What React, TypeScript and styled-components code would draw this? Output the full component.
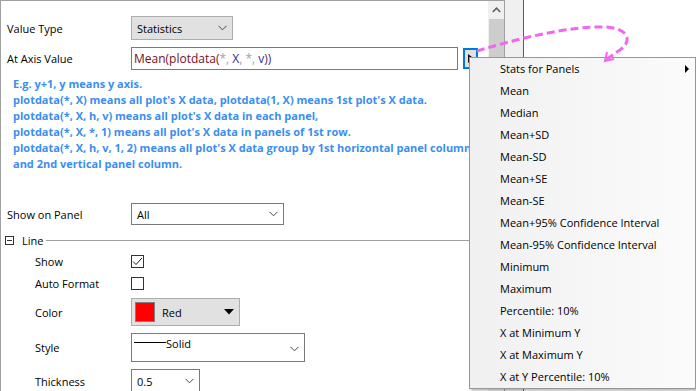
import React from "react";
import styled, { createGlobalStyle } from "styled-components";

const GlobalStyle = createGlobalStyle`
  html, body { margin: 0; padding: 0; background: #ffffff; }
  body {
    width: 696px; height: 391px; overflow: hidden;
    font-family: "Open Sans", "Noto Sans", sans-serif;
    font-size: 11px; color: #000;
  }
  * { box-sizing: border-box; }
`;

const Page = styled.div`
  position: relative;
  display: flex;
  width: 696px;
  height: 391px;
  overflow: hidden;
`;

const Panel = styled.div`
  display: flex;
  width: 505px;
  height: 391px;
  border-left: 1px solid #a0a0a0;
  border-top: 1px solid #a0a0a0;
  border-right: 1px solid #a0a0a0;
  background: #fff;
`;

const Content = styled.div`
  flex: 1;
  padding: 14px 0 0 6px;
  overflow: hidden;
`;

const Scrollbar = styled.div`
  width: 16px;
  background: #f0f0f0;
  display: flex;
  flex-direction: column;
  align-items: center;
`;

const ScrollArrow = styled.div`
  height: 18px;
  display: flex;
  align-items: center;
  justify-content: center;
`;

const ScrollThumb = styled.div`
  width: 15px;
  height: 90px;
  background: #cdcdcd;
`;

const Strip = styled.div`
  width: 19px;
  background: #f0f0f0;
  border-right: 1px solid #0078d7;
`;

const Row = styled.div<{ $mt: number; $h: number }>`
  display: flex;
  align-items: center;
  margin-top: ${(p) => p.$mt}px;
  height: ${(p) => p.$h}px;
`;

const Label = styled.div<{ $indent?: boolean }>`
  width: 124px;
  padding-left: ${(p) => (p.$indent ? 28 : 0)}px;
  white-space: nowrap;
  color: #000;
`;

const Select = styled.div<{ $w: number; $h: number; $gray?: boolean; $top?: boolean; $flush?: boolean }>`
  position: relative;
  width: ${(p) => p.$w}px;
  height: ${(p) => p.$h}px;
  border: 1px solid ${(p) => (p.$gray ? "#adadad" : "#7a7a7a")};
  background: ${(p) => (p.$gray ? "#e1e1e1" : "#ffffff")};
  display: flex;
  align-items: ${(p) => (p.$top ? "flex-start" : "center")};
  padding: ${(p) => (p.$top ? "2px 0 0 2px" : p.$flush ? "0" : "0 0 0 5px")};
`;

const SelectText = styled.span`
  flex: 1;
  white-space: nowrap;
`;

const ChevronBox = styled.span`
  display: flex;
  align-items: center;
  justify-content: center;
  width: 20px;
  align-self: center;
`;

const TextInput = styled.div`
  width: 327px;
  height: 23px;
  border: 1px solid #7a7a7a;
  padding-left: 2px;
  font-size: 12px;
  line-height: 21px;
  white-space: pre;
`;

const Tok = styled.span<{ $c: string }>`
  color: ${(p) => p.$c};
`;

const MenuButton = styled.div`
  margin-left: 5px;
  width: 15px;
  height: 21px;
  border: 2px solid #0078d7;
  background: #e1e1e1;
  display: flex;
  align-items: center;
  justify-content: center;
`;

const Hint = styled.div`
  margin-top: 6px;
  padding-left: 6px;
  color: #3a8ef0;
  font-weight: 700;
  font-size: 11px;
  line-height: 16px;
  white-space: nowrap;
`;

const GroupHeader = styled.div`
  display: flex;
  align-items: center;
  margin-top: 8px;
  height: 14px;
  margin-left: -2px;
`;

const Collapse = styled.span`
  position: relative;
  width: 9px;
  height: 9px;
  border: 1px solid #333;
  margin-right: 8px;
  &::after {
    content: "";
    position: absolute;
    left: 1px;
    right: 1px;
    top: 3px;
    height: 1px;
    background: #333;
  }
`;

const GroupRule = styled.span`
  flex: 1;
  height: 1px;
  background: #a0a0a0;
  margin-left: 3px;
`;

const Checkbox = styled.span`
  width: 13px;
  height: 13px;
  border: 1px solid #333;
  background: #fff;
  display: flex;
  align-items: center;
  justify-content: center;
`;

const Swatch = styled.span`
  width: 20px;
  height: 20px;
  background: #ff0000;
  border: 1px solid #808080;
  margin-left: 3px;
  margin-right: 7px;
`;

const LineSample = styled.span`
  width: 32px;
  height: 1px;
  background: #000;
  margin-top: 6px;
`;

const Menu = styled.div`
  position: absolute;
  left: 469px;
  top: 57px;
  width: 227px;
  border: 1px solid #979797;
  background: linear-gradient(90deg, #f0f0f0 0%, #f7f7f7 60%, #fbfbfb 100%);
  box-shadow: 2px 2px 2px rgba(0, 0, 0, 0.25);
`;

const MenuItem = styled.div`
  position: relative;
  height: 22px;
  display: flex;
  align-items: center;
  padding: 0 0 2px 30px;
  white-space: nowrap;
`;

const SubArrow = styled.span`
  position: absolute;
  right: 6px;
  top: 7px;
  width: 0;
  height: 0;
  border-top: 4px solid transparent;
  border-bottom: 4px solid transparent;
  border-left: 4px solid #000;
`;

const Overlay = styled.svg`
  position: absolute;
  left: 0;
  top: 0;
  pointer-events: none;
`;

const Chevron = () => (
  <svg width="9" height="6" viewBox="0 0 9 6">
    <polyline points="0.5,0.8 4.5,4.8 8.5,0.8" fill="none" stroke="#444" strokeWidth="1" />
  </svg>
);

const menuItems = [
  "Mean",
  "Median",
  "Mean+SD",
  "Mean-SD",
  "Mean+SE",
  "Mean-SE",
  "Mean+95% Confidence Interval",
  "Mean-95% Confidence Interval",
  "Minimum",
  "Maximum",
  "Percentile: 10%",
  "X at Minimum Y",
  "X at Maximum Y",
  "X at Y Percentile: 10%",
];

const hints = [
  "E.g. y+1, y means y axis.",
  "plotdata(*, X) means all plot's X data, plotdata(1, X) means 1st plot's X data.",
  "plotdata(*, X, h, v) means all plot's X data in each panel,",
  "plotdata(*, X, *, 1) means all plot's X data in panels of 1st row.",
  "plotdata(*, X, h, v, 1, 2) means all plot's X data group by 1st horizontal panel column",
  "and 2nd vertical panel column.",
];

export default function App() {
  return (
    <>
      <GlobalStyle />
      <Page>
        <Panel>
          <Content>
            <Row $mt={1} $h={24}>
              <Label>Value Type</Label>
              <Select $w={102} $h={24} $gray>
                <SelectText>Statistics</SelectText>
                <ChevronBox><Chevron /></ChevronBox>
              </Select>
            </Row>
            <Row $mt={7} $h={23}>
              <Label>At Axis Value</Label>
              <TextInput>
                <Tok $c="#7b0d1e">Mean(plotdata(</Tok>
                <Tok $c="#9aa3b5">*, </Tok>
                <Tok $c="#2e2e8f">X</Tok>
                <Tok $c="#9aa3b5">, *, </Tok>
                <Tok $c="#2e2e8f">v</Tok>
                <Tok $c="#4a2a6a">))</Tok>
              </TextInput>
              <MenuButton>
                <svg width="6" height="9" viewBox="0 0 6 9">
                  <polygon points="0,0 6,4.5 0,9" fill="#1a0a0a" />
                </svg>
              </MenuButton>
            </Row>
            <Hint>
              {hints.map((h) => (
                <div key={h}>{h}</div>
              ))}
            </Hint>
            <Row $mt={31} $h={22}>
              <Label>Show on Panel</Label>
              <Select $w={153} $h={22}>
                <SelectText>All</SelectText>
                <ChevronBox><Chevron /></ChevronBox>
              </Select>
            </Row>
            <GroupHeader>
              <Collapse />
              <span>Line</span>
              <GroupRule />
            </GroupHeader>
            <Row $mt={7} $h={14}>
              <Label $indent>Show</Label>
              <Checkbox>
                <svg width="11" height="9" viewBox="0 0 11 9">
                  <polyline points="1,4.5 4,7.5 10,1" fill="none" stroke="#222" strokeWidth="1" />
                </svg>
              </Checkbox>
            </Row>
            <Row $mt={8} $h={14}>
              <Label $indent>Auto Format</Label>
              <Checkbox />
            </Row>
            <Row $mt={8} $h={28}>
              <Label $indent>Color</Label>
              <Select $w={109} $h={28} $gray $flush>
                <Swatch />
                <SelectText>Red</SelectText>
                <ChevronBox>
                  <svg width="10" height="6" viewBox="0 0 10 6">
                    <polygon points="0,0 10,0 5,5.5" fill="#000" />
                  </svg>
                </ChevronBox>
              </Select>
            </Row>
            <Row $mt={7} $h={29}>
              <Label $indent>Style</Label>
              <Select $w={174} $h={29} $top>
                <LineSample />
                <SelectText>Solid</SelectText>
                <ChevronBox><Chevron /></ChevronBox>
              </Select>
            </Row>
            <Row $mt={7} $h={24}>
              <Label $indent>Thickness</Label>
              <Select $w={69} $h={24}>
                <SelectText>0.5</SelectText>
                <ChevronBox><Chevron /></ChevronBox>
              </Select>
            </Row>
          </Content>
          <Scrollbar>
            <ScrollArrow>
              <svg width="9" height="6" viewBox="0 0 9 6">
                <polyline points="0.8,5 4.5,1.2 8.2,5" fill="none" stroke="#606060" strokeWidth="1.6" />
              </svg>
            </ScrollArrow>
            <ScrollThumb />
          </Scrollbar>
        </Panel>
        <Strip />
        <Menu>
          <MenuItem>
            Stats for Panels
            <SubArrow />
          </MenuItem>
          {menuItems.map((m) => (
            <MenuItem key={m}>{m}</MenuItem>
          ))}
        </Menu>
        <Overlay width="696" height="391" viewBox="0 0 696 391">
          <path
            d="M477 51 C 520 38, 570 26, 605 27 C 630 28, 632 42, 620 50 C 614 54, 610 57, 606 60"
            fill="none"
            stroke="#f566f0"
            strokeWidth="3"
            strokeDasharray="8 4"
          />
          <polyline points="607,52 605,61 614,59" fill="none" stroke="#f566f0" strokeWidth="2" />
        </Overlay>
      </Page>
    </>
  );
}
